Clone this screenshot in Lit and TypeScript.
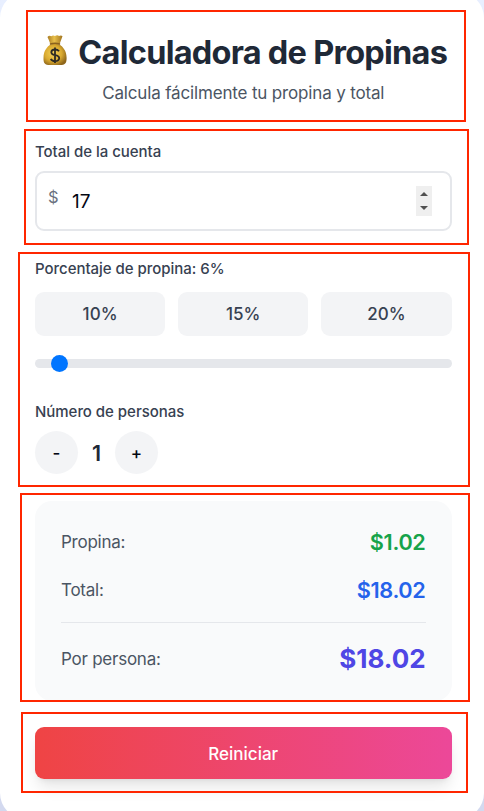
import { LitElement, html, css } from "lit";
import { customElement, state } from "lit/decorators.js";

@customElement("app-root")
export class AppRoot extends LitElement {
  @state() private bill = 17;
  @state() private percent = 6;
  @state() private people = 1;

  static styles = css`
    :host {
      display: block;
      position: relative;
      height: 811px;
      overflow: hidden;
      background: linear-gradient(#e8efff, #d3d9ef);
      font-family: Inter, "Liberation Sans", sans-serif;
      color: #1f2937;
    }
    * { box-sizing: border-box; }
    button { font: inherit; border: 0; padding: 0; color: inherit; }
    .card {
      height: 827px;
      margin-top: -8px;
      padding: 40px 32.5px 0 35px;
      border-radius: 26px;
      background: #fff;
      display: flex;
      flex-direction: column;
    }
    header { height: 108.5px; margin: 0 -5px 0 -2px; text-align: center; }
    h1 {
      margin: 0;
      height: 40px;
      display: flex;
      align-items: center;
      justify-content: center;
      gap: 10px;
      font-size: 32.5px;
      font-weight: 700;
      line-height: 40px;
      letter-spacing: -0.75px;
      white-space: nowrap;
    }
    .title { padding-top: 1px; }
    .bag { width: 26px; height: 32px; flex: none; margin-top: -4px; }
    .sub { margin: 8px 3px 0 0; font-size: 17px; line-height: 26px; letter-spacing: -0.16px; color: #4b5563; }
    .label { font-size: 15px; font-weight: 500; line-height: 22px; letter-spacing: -0.03px; color: #374151; }
    .bill {
      height: 60px;
      margin: 8px 0 27px;
      padding: 0 17.5px 0 11px;
      border: 2px solid #e5e7eb;
      border-radius: 9px;
      display: flex;
      align-items: center;
    }
    .cur { font-size: 16.5px; color: #6b7280; width: 24px; margin-top: -7px; }
    .amount { flex: 1; padding-top: 1.5px; font-size: 19px; color: #030712; }
    .spin { width: 16px; height: 30px; background: #efefef; display: block; }
    .quick { margin-top: 12.5px; display: grid; grid-template-columns: repeat(3, 1fr); gap: 13px; }
    .quick button {
      height: 43.5px;
      border-radius: 9px;
      background: #f3f4f6;
      color: #374151;
      font-size: 17px;
      font-weight: 500;
    }
    .track { height: 9px; margin: 23.5px 0 33px; border-radius: 5px; background: #e5e7eb; display: flex; align-items: center; }
    .thumb { width: 17px; height: 17px; border-radius: 50%; background: #0075ff; flex: none; }
    .people { margin-top: 8px; display: flex; align-items: center; }
    .people button { width: 43px; height: 43px; border-radius: 50%; background: #f3f4f6; color: #030712; font-size: 17px; font-weight: 500; }
    .count { width: 37px; text-align: center; font-size: 21.5px; font-weight: 600; }
    .summary {
      height: 200px;
      margin-top: 27px;
      padding: 23px 26px 0;
      border-radius: 17px;
      background: #f9fafb;
    }
    .row { display: flex; align-items: center; justify-content: space-between; height: 35px; margin-bottom: 13px; font-size: 17px; letter-spacing: -0.24px; color: #4b5563; }
    .row b { font-size: 21.7px; font-weight: 600; letter-spacing: -0.35px; }
    .row .tip { color: #16a34a; }
    .row .total { color: #2563eb; }
    .row.last { height: 72px; margin-top: 15px; border-top: 1px solid #e5e7eb; }
    .row.last b { font-size: 26px; font-weight: 700; letter-spacing: -0.05px; color: #4f46e5; }
    .row:has(+ .last) { margin-bottom: 0; }
    .reset {
      height: 52px;
      margin-top: 26px;
      padding-top: 2px;
      flex: none;
      border-radius: 9px;
      background: linear-gradient(90deg, #ef4444, #ec4899);
      box-shadow: 0 11px 16px -3px rgba(0, 0, 0, 0.1), 0 4px 6px -4px rgba(0, 0, 0, 0.1);
      color: #fff;
      font-size: 17px;
      font-weight: 500;
    }
    .mark { position: absolute; border: 2px solid #ff2600; pointer-events: none; }
    .m1 { left: 26px; top: 10px; width: 440px; height: 112px; }
    .m2 { left: 24px; top: 129px; width: 445px; height: 116px; }
    .m3 { left: 18px; top: 252px; width: 452px; height: 235px; }
    .m4 { left: 20px; top: 493px; width: 450px; height: 209px; }
    .m5 { left: 21px; top: 712px; width: 447px; height: 81px; }
  `;

  private reset() {
    this.bill = 0;
    this.percent = 10;
    this.people = 1;
  }

  render() {
    const tip = (this.bill * this.percent) / 100;
    const total = this.bill + tip;
    const money = (n: number) => `$${n.toFixed(2)}`;
    return html`
      <main class="card">
        <header>
          <h1>
            <svg class="bag" viewBox="0 0 26 32">
              <defs>
                <radialGradient id="gold" cx="42%" cy="45%" r="62%">
                  <stop offset="0" stop-color="#f6d458" />
                  <stop offset=".6" stop-color="#d9a92f" />
                  <stop offset="1" stop-color="#8e661b" />
                </radialGradient>
                <linearGradient id="neck" x2="1">
                  <stop offset="0" stop-color="#a77a22" />
                  <stop offset=".45" stop-color="#e9c04a" />
                  <stop offset="1" stop-color="#a1741f" />
                </linearGradient>
              </defs>
              <path d="M8.500 10.500 Q7 6 5.500 3 Q7 1.200 9.300 2.200 Q11 .8 13 2 Q15.500 .6 17 2.100 Q19 .8 20.500 2.200 Q19 6 17.500 10.500Z" fill="url(#neck)" />
              <path d="M8.500 10.500 Q13 9 17.500 10.500 C21 13 24.500 16.500 24.600 24 C24.600 29.500 23 31 18 31.100 H8 C3 31 1.400 29.500 1.500 24 C1.600 16.500 5 13 8.500 10.500Z" fill="url(#gold)" />
              <path d="M8.500 10 Q13 8.400 17.500 10" fill="none" stroke="#8b621d" stroke-width="1.500" stroke-linecap="round" />
              <path d="M17 17.300 Q15.800 15.500 13 15.500 Q9.300 15.700 9.300 18.300 Q9.400 20.500 13 21.200 Q17.200 21.900 17.200 24.300 Q17 27.100 13 27.200 Q9.700 27.100 8.800 24.900 M13 13.500 V29" fill="none" stroke="#2e2b24" stroke-width="1.800" />
            </svg>
            <span class="title">Calculadora de Propinas</span>
          </h1>
          <p class="sub">Calcula fácilmente tu propina y total</p>
        </header>

        <div class="label">Total de la cuenta</div>
        <div class="bill">
          <span class="cur">$</span>
          <span class="amount">${this.bill}</span>
          <svg class="spin" viewBox="0 0 16 30">
            <path d="M4 10 L8 6 L12 10Z M4 20 L8 24 L12 20Z" fill="#505050" />
          </svg>
        </div>

        <div class="label">Porcentaje de propina: ${this.percent}%</div>
        <div class="quick">
          ${[10, 15, 20].map(
            (p) => html`<button @click=${() => (this.percent = p)}>${p}%</button>`
          )}
        </div>
        <div class="track">
          <span class="thumb" style="margin-left:${(this.percent / 50) * 132}px"></span>
        </div>

        <div class="label">Número de personas</div>
        <div class="people">
          <button @click=${() => (this.people = Math.max(1, this.people - 1))}>-</button>
          <span class="count">${this.people}</span>
          <button @click=${() => this.people++}>+</button>
        </div>

        <section class="summary">
          <div class="row"><span>Propina:</span><b class="tip">${money(tip)}</b></div>
          <div class="row"><span>Total:</span><b class="total">${money(total)}</b></div>
          <div class="row last"><span>Por persona:</span><b>${money(total / this.people)}</b></div>
        </section>

        <button class="reset" @click=${this.reset}>Reiniciar</button>
      </main>
      <div class="mark m1"></div>
      <div class="mark m2"></div>
      <div class="mark m3"></div>
      <div class="mark m4"></div>
      <div class="mark m5"></div>
    `;
  }
}
